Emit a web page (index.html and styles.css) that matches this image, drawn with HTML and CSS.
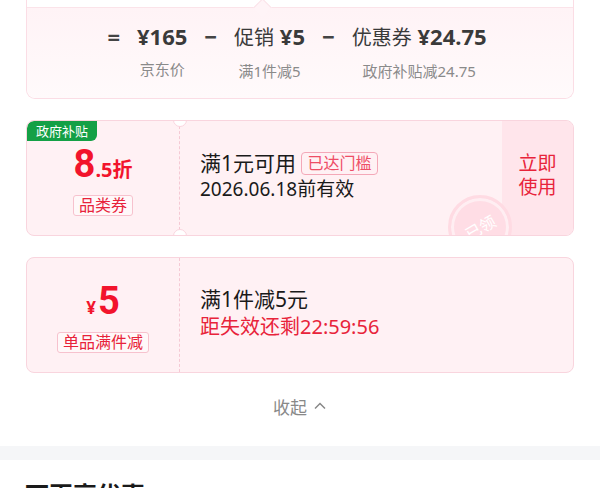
FILE: index.html
```html
<!DOCTYPE html>
<html>
  <head>
    <title>优惠明细</title>
    <link rel="stylesheet" href="styles.css">
  </head>
  <body>
    <div class="panel">
      <div class="summary">
        <div class="summaryTop"></div>
        <div class="summaryBody">
          <div class="formula">
            <div class="op">=</div>
            <div class="term">
              <div class="value">¥165</div>
              <div class="label">京东价</div>
            </div>
            <div class="op">−</div>
            <div class="term">
              <div class="value"><span class="name">促销</span> ¥5</div>
              <div class="label">满1件减5</div>
            </div>
            <div class="op">−</div>
            <div class="term">
              <div class="value"><span class="name">优惠券</span> ¥24.75</div>
              <div class="label">政府补贴减24.75</div>
            </div>
          </div>
        </div>
      </div>

      <div class="coupon notched">
        <div class="badge">政府补贴</div>
        <div class="couponLeft">
          <div class="amount"><span class="big">8</span><span class="small">.5折</span></div>
          <div class="tag">品类券</div>
        </div>
        <div class="couponMain">
          <div class="rule">满1元可用 <span class="reached">已达门槛</span></div>
          <div class="expire">2026.06.18前有效</div>
        </div>
        <div class="couponAction">立即<br>使用</div>
        <div class="stamp"><span>已领</span></div>
      </div>

      <div class="coupon">
        <div class="couponLeft">
          <div class="amount"><span class="yen">¥</span><span class="big">5</span></div>
          <div class="tag">单品满件减</div>
        </div>
        <div class="couponMain">
          <div class="rule">满1件减5元</div>
          <div class="countdown">距失效还剩22:59:56</div>
        </div>
      </div>

      <div class="collapse">
        收起
        <svg width="14" height="14" viewBox="0 0 14 14"><path d="M2 9.5 L7 4.5 L12 9.5" fill="none" stroke="#888" stroke-width="1.5"/></svg>
      </div>
    </div>

    <div class="divider"></div>

    <div class="section">
      <h2>可再享优惠</h2>
    </div>
  </body>
</html>
```

FILE: styles.css
```css
/* General Styles */
body {
  margin: 0;
  width: 600px;
  background: #ffffff;
  font-family: "Noto Sans", "Noto Sans CJK SC", sans-serif;
  color: #1a1a1a;
  overflow: hidden;
}

.panel {
  padding: 0 26px 0 26px;
}

/* Summary box */
.summary {
  margin-top: -12px;
  border: 1px solid #fbdde5;
  border-top: none;
  border-radius: 0 0 9px 9px;
}

.summaryTop {
  height: 19px;
  background: #ffffff;
  border-bottom: 1px solid #fbe3e9;
  position: relative;
}

.summaryTop::after {
  content: "";
  position: absolute;
  left: 229px;
  bottom: -7px;
  width: 12px;
  height: 12px;
  background: #fff4f7;
  border-top: 1px solid #fbe3e9;
  border-left: 1px solid #fbe3e9;
  transform: rotate(45deg);
}

.summaryBody {
  background: linear-gradient(#fff3f6, #fffafb);
  border-radius: 0 0 9px 9px;
  padding: 13px 0 17px 0;
}

.formula {
  display: flex;
  justify-content: center;
  gap: 17px;
  margin-left: -6px;
}

.op {
  font-size: 22px;
  line-height: 30px;
  font-weight: 700;
  color: #444;
}

.term {
  display: flex;
  flex-direction: column;
  align-items: center;
}

.value {
  font-size: 22px;
  line-height: 30px;
  font-weight: 700;
  color: #3a3a3a;
  white-space: nowrap;
}

.value .name {
  font-weight: 400;
  font-size: 20px;
}

.label {
  margin-top: 8px;
  font-size: 15px;
  line-height: 20px;
  color: #8a8a8a;
}

/* Coupons */
.coupon {
  position: relative;
  display: flex;
  box-sizing: border-box;
  height: 116px;
  margin-top: 21px;
  border: 1px solid #f9d5de;
  border-radius: 8px;
  background: #fff1f4;
  overflow: hidden;
}

.badge {
  position: absolute;
  left: 0;
  top: 0;
  width: 70px;
  height: 20px;
  background: #14a046;
  color: #ffffff;
  font-size: 13px;
  line-height: 20px;
  text-align: center;
  border-radius: 7px 0 6px 0;
}

.couponLeft {
  width: 153px;
  flex-shrink: 0;
  display: flex;
  flex-direction: column;
  align-items: center;
  justify-content: center;
  border-right: 1px dashed #f5c9d4;
  padding-top: 6px;
  box-sizing: border-box;
}

.notched::before,
.notched::after {
  content: "";
  position: absolute;
  left: 146px;
  width: 12px;
  height: 12px;
  border-radius: 50%;
  background: #ffffff;
  border: 1px solid #f9d5de;
}

.notched::before {
  top: -8px;
}

.notched::after {
  bottom: -8px;
}

.amount {
  color: #f2142c;
  font-weight: 700;
  white-space: nowrap;
  line-height: 36px;
}

.amount .big {
  font-size: 38px;
  font-family: "Roboto", "Noto Sans", sans-serif;
}

.amount .small {
  font-size: 20px;
}

.amount .yen {
  font-size: 17px;
  margin-right: 2px;
}

.tag {
  margin-top: 6px;
  padding: 0 5px;
  border: 1px solid #f7c2ce;
  border-radius: 3px;
  background: #fff8f9;
  color: #e8233a;
  font-size: 16px;
  line-height: 19px;
}

.couponMain {
  flex: 1;
  display: flex;
  flex-direction: column;
  justify-content: center;
  padding-left: 20px;
  padding-bottom: 4px;
}

.rule {
  font-size: 21px;
  line-height: 27px;
  color: #1a1a1a;
}

.reached {
  display: inline-block;
  padding: 0 5px;
  border: 1px solid #f4a8b8;
  border-radius: 4px;
  color: #ee4d66;
  font-size: 16px;
  line-height: 21px;
  vertical-align: 2px;
}

.expire {
  font-size: 19px;
  line-height: 25px;
  color: #1a1a1a;
}

.countdown {
  font-size: 20px;
  line-height: 27px;
  color: #e8233a;
}

.couponAction {
  width: 71px;
  flex-shrink: 0;
  display: flex;
  align-items: center;
  justify-content: center;
  text-align: center;
  background: #ffe5eb;
  color: #e8233a;
  font-size: 19px;
  line-height: 24px;
  padding-bottom: 6px;
  box-sizing: border-box;
}

.stamp {
  position: absolute;
  left: 421px;
  top: 74px;
  width: 58px;
  height: 58px;
  border-radius: 50%;
  border: 3px solid #ffdbe3;
  background: #ffdde5;
  box-shadow: inset 0 0 0 3px #ffeef2;
  display: flex;
  align-items: center;
  justify-content: center;
}

.stamp span {
  color: #ffffff;
  font-size: 16px;
  transform: rotate(-30deg);
}

/* Collapse */
.collapse {
  display: flex;
  align-items: center;
  justify-content: center;
  gap: 6px;
  height: 66px;
  color: #888888;
  font-size: 17px;
}

.divider {
  height: 14px;
  margin-top: 7px;
  background: #f5f6f8;
}

.section {
  padding: 16px 25px 10px 25px;
}

.section h2 {
  margin: 0;
  font-size: 24px;
  font-weight: 700;
  color: #1a1a1a;
}
```
